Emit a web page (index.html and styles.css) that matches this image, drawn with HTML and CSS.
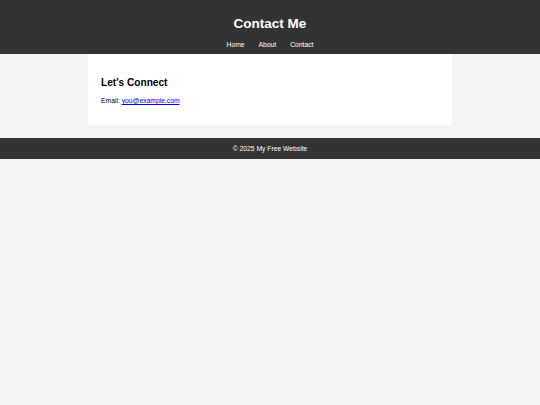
FILE: index.html
```html
<!DOCTYPE html>
<html lang="en">
<head>
<meta charset="utf-8">
<title>Contact Me</title>
<link rel="stylesheet" href="styles.css">
</head>
<body>
<header class="site-header">
  <h1 class="site-title">Contact Me</h1>
  <nav class="site-nav">
    <a href="#">Home</a>
    <a href="#">About</a>
    <a href="#">Contact</a>
  </nav>
</header>
<main class="card">
  <h2 class="card-title">Let's Connect</h2>
  <p class="card-text">Email: <a href="#">you@example.com</a></p>
</main>
<footer class="site-footer">
  <p>&copy; 2025 My Free Website</p>
</footer>
</body>
</html>
```

FILE: styles.css
```css
html, body {
  margin: 0;
  padding: 0;
}
body {
  background: #f4f4f4;
  font-family: "Liberation Sans", Arial, sans-serif;
  color: #000;
}
.site-header {
  background: #333;
  color: #fff;
  text-align: center;
  padding: 16px 0 5px;
}
.site-title {
  margin: 0 0 9px;
  font-size: 13.5px;
  line-height: 16px;
  font-weight: bold;
}
.site-nav {
  display: flex;
  justify-content: center;
  gap: 14px;
  font-size: 6.75px;
  line-height: 8px;
}
.site-nav a {
  color: #fff;
  text-decoration: none;
}
.card {
  display: block;
  width: 364px;
  box-sizing: border-box;
  margin: 0 auto;
  background: #fff;
  padding: 13px 13px 20px;
}
.card-title {
  margin: 10px 0 8px;
  font-size: 10.125px;
  line-height: 12px;
  font-weight: bold;
}
.card-text {
  margin: 0;
  font-size: 6.75px;
  line-height: 8px;
}
.card-text a {
  color: #0000ee;
}
.site-footer {
  margin-top: 13px;
  background: #333;
  color: #fff;
  text-align: center;
  padding: 6.8px 0 6.5px;
}
.site-footer p {
  margin: 0;
  font-size: 6.75px;
  line-height: 8px;
}
```
